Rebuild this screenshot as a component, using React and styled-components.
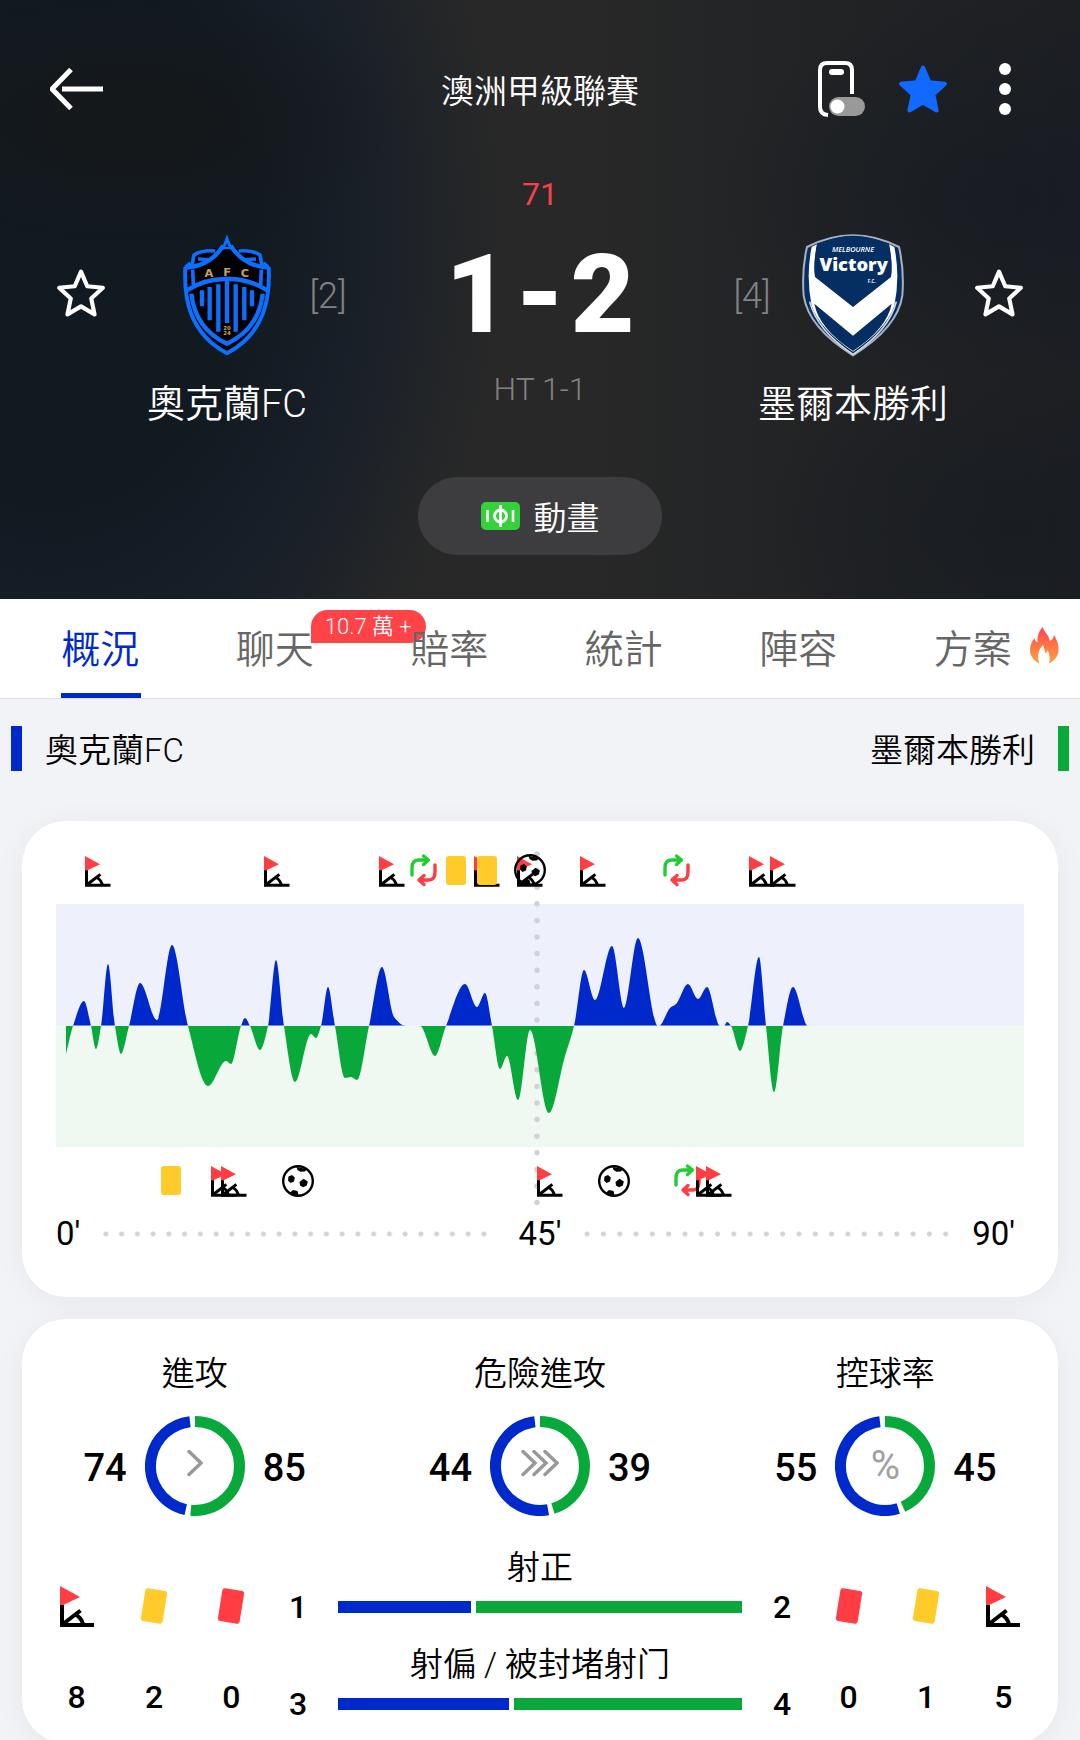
import React from "react";
import styled, { createGlobalStyle } from "styled-components";

const BLUE = "#0029cc";
const GREEN = "#08a83a";
const RED = "#ff3d42";
const YELLOW = "#ffcb2b";

const GlobalStyle = createGlobalStyle`
  *, *::before, *::after { box-sizing: border-box; }
  body {
    margin: 0;
    font-family: Roboto, "Noto Sans CJK TC", sans-serif;
    color: #000;
    background: #f2f3f7;
  }
  button { border: 0; padding: 0; background: none; font: inherit; color: inherit; cursor: pointer; }
  h1, h2, p { margin: 0; font-weight: 400; }
  svg { display: block; flex-shrink: 0; }
`;

/* ---------- shell ---------- */

const Screen = styled.div`
  height: 100vh;
  overflow-y: auto;
  scrollbar-width: none;
`;

const Header = styled.header`
  display: flex;
  flex-direction: column;
  align-items: center;
  padding-bottom: 44px;
  color: #fff;
  background:
    radial-gradient(ellipse 280px 130px at 12% 20%, rgba(22, 24, 25, 0.9), transparent),
    radial-gradient(ellipse 300px 200px at 94% 33%, rgba(20, 25, 34, 0.6), transparent),
    radial-gradient(ellipse 260px 160px at 94% 88%, rgba(22, 26, 32, 0.6), transparent),
    radial-gradient(ellipse 460px 640px at 5% 38%, #111921 42%, rgba(22, 30, 40, 0.8) 68%, transparent 98%),
    linear-gradient(90deg, #1b1f26 0%, #282828 36%, #282828 54%, #212325 76%, #1d1f23 100%);
`;

const TopBar = styled.div`
  display: grid;
  grid-template-columns: 1fr auto 1fr;
  align-items: center;
  width: 100%;
  padding: 56px 50px 0;
`;

const League = styled.h1`
  padding-top: 5px;
  font-size: 33px;
  line-height: 61px;
  font-weight: 350;
`;

const Actions = styled.div`
  display: flex;
  justify-content: flex-end;
  gap: 32px;
`;

const IconButton = styled.button`
  display: flex;
  align-items: center;
  justify-content: ${(p) => (p.$start ? "flex-start" : "center")};
  width: 50px;
  height: 66px;
`;

const Minute = styled.p`
  margin: 56px 0 23px;
  font-size: 32px;
  line-height: 32px;
  color: #f5414b;
`;

const Match = styled.div`
  display: grid;
  grid-template-columns: 50px 40px 162px 40px 1fr 40px 162px 40px 50px;
  grid-template-rows: 124px 53px;
  row-gap: 16px;
  align-items: center;
  justify-items: center;
  width: 100%;
  padding: 0 56px;
`;

const Cell = styled.div`
  grid-column: ${(p) => p.$col};
  grid-row: 1;
`;

const FavouriteCell = styled(Cell)`
  padding-bottom: 4px;
`;

const Rank = styled(Cell)`
  padding-top: 2px;
  font-size: 36px;
  line-height: 36px;
  font-weight: 300;
  color: #808285;
`;

const Score = styled(Cell)`
  display: flex;
  gap: 6px;
  font-size: 110px;
  line-height: 124px;
  font-weight: 900;
`;

const TeamName = styled.h2`
  grid-column: ${(p) => p.$col};
  grid-row: 2;
  align-self: end;
  font-size: 38px;
  line-height: 44px;
  font-weight: 350;
  white-space: nowrap;
`;

const HalfTime = styled.p`
  grid-column: 5;
  grid-row: 2;
  align-self: start;
  font-size: 32px;
  line-height: 32px;
  font-weight: 300;
  color: #808184;
`;

const AnimationButton = styled.button`
  display: flex;
  align-items: center;
  justify-content: center;
  gap: 14px;
  width: 244px;
  height: 78px;
  margin-top: 51px;
  border-radius: 39px;
  background: #3d3d3f;
  font-size: 33px;
  font-weight: 350;
`;

/* ---------- tabs ---------- */

const Tabs = styled.nav`
  position: relative;
  z-index: 0;
  display: grid;
  grid-template-columns: repeat(6, 1fr);
  padding: 0 19px 0 14px;
  background: #fff;
  border-bottom: 1px solid #dfe1e6;
`;

const Tab = styled.button`
  position: relative;
  justify-self: center;
  width: 80px;
  border-bottom: 5px solid ${(p) => (p.$active ? BLUE : "transparent")};
  padding-top: 9px;
  font-size: 39px;
  line-height: 85px;
  font-weight: 350;
  text-align: left;
  white-space: nowrap;
  color: ${(p) => (p.$active ? BLUE : "#666")};
`;

const Badge = styled.span`
  position: absolute;
  z-index: -1;
  left: 75px;
  top: 11px;
  padding: 1px 14px 0;
  border-radius: 20px 20px 20px 0;
  background: #ff4347;
  color: #fff;
  font-size: 22px;
  line-height: 32px;
`;

const TabLabel = styled.span`
  position: relative;
`;

const FlameSpot = styled.span`
  position: absolute;
  left: 96px;
  top: 28px;
`;

/* ---------- overview ---------- */

const Legend = styled.div`
  display: flex;
  justify-content: space-between;
  padding: 27px 11px 50px;
`;

const LegendTeam = styled.div`
  display: flex;
  flex-direction: ${(p) => (p.$away ? "row-reverse" : "row")};
  align-items: center;
  gap: 23px;
  font-size: 33px;
  font-weight: 350;
  line-height: 45px;

  &::before {
    content: "";
    width: 11px;
    height: 45px;
    background: ${(p) => (p.$away ? GREEN : BLUE)};
  }
`;

const LegendName = styled.span`
  padding-top: 4px;
  line-height: 41px;
`;

const Cards = styled.main`
  display: flex;
  flex-direction: column;
  gap: 22px;
  padding: 0 22px;
`;

const Card = styled.section`
  border-radius: 44px;
  background: #fff;
  box-shadow: 0 4px 30px rgba(20, 24, 40, 0.05);
`;

const TimelineCard = styled(Card)`
  padding: 29px 34px 46px;

  > svg { width: 100%; height: auto; }
`;

const Axis = styled.div`
  display: grid;
  grid-template-columns: 1fr auto 1fr;
  align-items: center;
  margin-top: 11px;
  font-size: 33px;
  line-height: 34px;
`;

const AxisHalf = styled.div`
  display: flex;
  align-items: center;
  padding-right: 9px;
`;

const Dots = styled.div`
  flex: 1;
  height: 6px;
  margin: 0 18px;
  background: radial-gradient(circle at center, #d2d4d5 2px, transparent 3px) 0 0 / 16px 6px round;
`;

const StatsCard = styled(Card)`
  padding: 38px 16px 22px;
`;

const Rings = styled.div`
  display: grid;
  grid-template-columns: repeat(3, 1fr);
  margin: 0 -16px;
`;

const RingBlock = styled.div`
  display: flex;
  flex-direction: column;
  align-items: center;
  gap: 25px;
`;

const StatTitle = styled.h2`
  font-size: 33px;
  line-height: 34px;
  font-weight: 350;
  text-align: center;
`;

const RingRow = styled.div`
  display: grid;
  grid-template-columns: 1fr 100px 1fr;
  align-items: center;
  gap: 18px;
  width: 100%;
`;

const RingValue = styled.span`
  padding-top: 4px;
  font-size: 38px;
  line-height: 40px;
  font-weight: 500;
  text-align: ${(p) => (p.$left ? "right" : "left")};
`;

const RingFrame = styled.div`
  display: grid;
  place-items: center;

  > * { grid-area: 1 / 1; }
`;

const Percent = styled.span`
  font-size: 40px;
  line-height: 40px;
  color: #a0a0a0;
`;

const StatsGrid = styled.div`
  display: grid;
  grid-template-columns: 232px 1fr 232px;
  margin-top: 35px;
`;

const Discipline = styled.div`
  display: grid;
  grid-template-columns: repeat(3, 1fr);
  padding-top: 34px;
`;

const DisciplineItem = styled.div`
  display: flex;
  flex-direction: column;
  align-items: center;
  gap: 53px;
`;

const IconBox = styled.div`
  display: flex;
  align-items: center;
  height: 42px;
`;

const Count = styled.span`
  width: ${(p) => (p.$fixed ? "56px" : "auto")};
  font-size: 32px;
  line-height: 34px;
  font-weight: 500;
  text-align: center;
`;

const Shots = styled.div`
  display: flex;
  flex-direction: column;
  gap: 24px;
`;

const ShotStat = styled.div`
  display: flex;
  flex-direction: column;
  gap: 5px;
`;

const ShotRow = styled.div`
  display: flex;
  align-items: center;
  gap: 12px;
`;

const Bar = styled.div`
  display: grid;
  grid-template-columns: ${(p) => `${p.$home}fr ${p.$away}fr`};
  gap: 5px;
  flex: 1;
  height: 12px;

  &::before { content: ""; background: ${BLUE}; }
  &::after { content: ""; background: ${GREEN}; }
`;

/* ---------- icons ---------- */

const STAR = "M24 3.5 L30 17.5 L45 19 L33.8 29.2 L37 44.5 L24 36.8 L11 44.5 L14.2 29.2 L3 19 L18 17.5 Z";

const Star = ({ filled }) => (
  <svg width="50" height="50" viewBox="0 0 48 48" aria-hidden="true">
    <path
      d={STAR}
      fill={filled ? "#1169ff" : "none"}
      stroke={filled ? "#1169ff" : "#fff"}
      strokeWidth="4"
      strokeLinejoin="round"
    />
  </svg>
);

const BackArrow = () => (
  <svg width="54" height="42" viewBox="0 0 54 42" fill="none" stroke="#fff" aria-hidden="true">
    <path d="M21 1.5 L2 21 L21 40.500" strokeWidth="5" />
    <path d="M12 21 H53" strokeWidth="5" />
  </svg>
);

const PhoneToggle = () => (
  <svg width="47" height="56" viewBox="0 0 47 56" fill="none" aria-hidden="true">
    <path d="M34 33 V9 Q34 2 27 2 H9 Q2 2 2 9 V46 Q2 53.5 10 54" stroke="#fff" strokeWidth="4" />
    <rect x="11" y="8" width="15" height="6" rx="3" fill="#fff" />
    <rect x="11" y="36" width="36" height="19" rx="9.5" fill="#999" />
    <circle cx="19.5" cy="45.500" r="7" fill="#fff" />
  </svg>
);

const MoreDots = () => (
  <svg width="12" height="52" viewBox="0 0 12 52" fill="#fff" aria-hidden="true">
    <circle cx="6" cy="6" r="6" />
    <circle cx="6" cy="26" r="6" />
    <circle cx="6" cy="46" r="6" />
  </svg>
);

const PitchIcon = () => (
  <svg width="39" height="28" viewBox="0 0 39 28" fill="none" stroke="#fff" aria-hidden="true">
    <rect width="39" height="28" rx="5" fill="#34d13d" stroke="none" />
    <path d="M6.500 8 V20 M32 8 V20" strokeWidth="2.6" />
    <circle cx="19.500" cy="14" r="6" strokeWidth="2.8" />
    <path d="M19.500 3 V25" strokeWidth="2.8" />
  </svg>
);

const Flame = () => (
  <svg width="29" height="37" viewBox="0 0 29 37" aria-hidden="true">
    <defs>
      <linearGradient id="flame" x1="0" y1="0" x2="0" y2="1">
        <stop offset="0.1" stopColor="#ff4d55" />
        <stop offset="0.5" stopColor="#ff7442" />
        <stop offset="1" stopColor="#ffa247" />
      </linearGradient>
    </defs>
    <path
      fill="url(#flame)"
      d="M12.700 0 C14 5 19 8 20 14 C22 13 23.500 11 24 8 C27 13 29 18 28.500 24 C28 30 24 34 19 36.500 C20.500 31 19.500 27 17.500 23 C17 25 16.500 26 15.200 26 C14.500 22 14 20 13 18 C8 23 7 30 9.500 36.500 C4 34 0 29 0 23 C0 18 2 14 4.500 11 C5 13.500 6 15 7.500 15 C7 9 9 4 12.700 0 Z"
    />
  </svg>
);

const AucklandCrest = () => (
  <svg width="90" height="124" viewBox="36 24 270 372" role="img" aria-label="奧克蘭FC">
    <path
      d="M171 30 L188 68 L240 72 L272 90 L280 112 L300 124 Q304 210 284 270 Q255 340 171 392 Q87 340 58 270 Q38 210 42 124 L62 112 L70 90 L102 72 L154 68 Z"
      fill="#000"
    />
    <g fill="none" stroke="#0b70ff" strokeWidth="11">
      <path d="M46 126 Q42 210 64 268 Q94 344 171 385 Q248 344 278 268 Q300 210 296 126" strokeWidth="12" />
      <path d="M46 128 Q120 124 160 62 M296 128 Q222 124 182 62" strokeWidth="13" />
      <path d="M66 122 L72 90 Q96 74 136 78 M276 122 L270 90 Q246 74 206 78" />
      <path d="M84 102 L118 104 M258 102 L224 104" strokeWidth="10" />
      <path d="M46 128 L62 114 M296 128 L280 114" />
      <path d="M68 134 L70 180 M274 134 L272 180" />
      <path d="M50 196 Q108 160 171 162 Q234 160 292 196" strokeWidth="13" />
      <path d="M64 206 Q76 312 171 356 Q266 312 278 206" strokeWidth="13" />
      <path d="M96 196 V244 M119 186 V286 M145 178 V320 M171 164 V294 M197 178 V320 M223 186 V286 M246 196 V244" strokeWidth="13" />
    </g>
    <path d="M171 28 L190 78 Q171 66 152 78 Z" fill="#0b70ff" />
    <path d="M171 55 L176 66 H166 Z" fill="#000" />
    <g fill="#c9a063" fontFamily="DejaVu Sans, sans-serif" fontWeight="700" fontSize="34" textAnchor="middle">
      <text x="117" y="157">A</text>
      <text x="171" y="153">F</text>
      <text x="225" y="157">C</text>
      <text x="171" y="314" fontSize="16">20</text>
      <text x="171" y="329" fontSize="16">24</text>
    </g>
  </svg>
);

const VictoryCrest = () => (
  <svg width="104" height="124" viewBox="32 20 312 372" role="img" aria-label="墨爾本勝利">
    <path
      d="M50 62 Q188 -8 326 62 Q342 130 336 208 Q322 304 188 387 Q54 304 40 208 Q34 130 50 62 Z"
      fill="#052f63"
      stroke="#a9b2bf"
      strokeWidth="6"
    />
    <path
      d="M64 62 L80 54 Q70 110 74 152 L188 242 L302 152 Q306 110 296 54 L312 62 Q330 150 312 238 Q288 308 188 376 Q88 308 64 238 Q46 150 64 62 Z"
      fill="#fff"
    />
    <path d="M80 54 Q188 2 296 54 Q308 110 302 150 L188 240 L74 150 Q68 110 80 54 Z" fill="#052f63" />
    <path d="M72 232 L188 328 L304 232 Q290 306 188 374 Q86 306 72 232 Z" fill="#052f63" />
    <path d="M58 226 Q80 312 188 384 Q296 312 318 226" fill="none" stroke="#d5dbe4" strokeWidth="5" />
    <g fill="#fff" fontFamily="Open Sans, sans-serif" textAnchor="middle">
      <text x="188" y="76" fontSize="22" fontWeight="600" fontStyle="italic">MELBOURNE</text>
      <text x="190" y="134" fontSize="55" fontWeight="800">Victory</text>
      <text x="244" y="170" fontSize="13" fontWeight="700">F.C.</text>
    </g>
  </svg>
);

const CornerShape = () => (
  <>
    <path d="M0 0 L20 11 L0 20.500 Z" fill={RED} />
    <path d="M2 19 V39 H34" fill="none" stroke="#000" strokeWidth="4" />
    <path d="M3 38 L20.500 24.500 M14.500 28 Q21 31 23 38" fill="none" stroke="#000" strokeWidth="4" />
  </>
);

const CornerIcon = () => (
  <svg width="34" height="41" viewBox="0 0 34 41" role="img" aria-label="角球">
    <CornerShape />
  </svg>
);

const CardIcon = ({ color, label }) => (
  <svg width="28" height="38" viewBox="0 0 28 38" role="img" aria-label={label}>
    <rect x="3" y="2.500" width="22" height="33" rx="2.500" fill={color} transform="rotate(9 14 19)" />
  </svg>
);

/* ---------- match timeline ---------- */

const EVENTS = [
  ["corner", 29, 6], ["corner", 208, 6], ["corner", 323, 6], ["sub", 354, 4],
  ["yellow", 390, 6], ["corner", 418, 6], ["yellow", 421, 6], ["corner", 461, 6],
  ["goal", 474, 20], ["corner", 524, 6], ["sub", 607, 4], ["corner", 693, 6], ["corner", 714, 6],
  ["yellow", 105, 316], ["corner", 155, 316], ["corner", 165, 316], ["goal", 242, 331],
  ["corner", 481, 316], ["goal", 558, 331], ["sub", 618, 314], ["corner", 640, 316], ["corner", 650, 316],
];

// [position, pressure]: above zero is the home side, below zero the away side
const PRESSURE = [
  [10, -28], [17, 0], [28, 25], [35, 0], [40, -23], [45, 0], [52, 62], [59, 0], [65, -28], [73, 0],
  [84, 43], [101, 6], [116, 81], [132, 0], [152, -60], [170, -35], [175, -38], [185, 0], [189, 8],
  [194, 0], [204, -24], [212, 0], [220, 66], [228, 0], [239, -56], [255, -8], [260, -12], [265, 0],
  [272, 39], [279, 0], [289, -52], [295, -51], [301, -54], [313, 0], [326, 59], [338, 9], [350, 0],
  [364, 0], [379, -30], [390, 0], [409, 42], [421, 19], [429, 33], [436, 0], [444, -43], [451, -30],
  [462, -74], [474, -4], [493, -87], [509, -30], [518, 0], [528, 56], [539, 26], [556, 80], [568, 18],
  [582, 88], [602, 0], [603, 0], [614, 18], [620, 22], [632, 42], [642, 27], [651, 39], [664, 0], [668, 0],
  [671, 4], [675, 0], [684, -25], [692, 0], [703, 69], [710, 0], [718, -66], [727, 0], [737, 39], [752, 0],
];

const MID = 176;

// Monotone cubic curve, so that no peak overshoots its data point
function pressurePath(points) {
  const n = points.length;
  const slope = [];
  for (let i = 0; i < n - 1; i++) {
    slope.push((points[i + 1][1] - points[i][1]) / (points[i + 1][0] - points[i][0]));
  }
  const tangent = points.map((_, i) => {
    if (i === 0) return slope[0];
    if (i === n - 1) return 0;
    const a = slope[i - 1];
    const b = slope[i];
    if (a * b <= 0) return 0;
    return (2 * a * b) / (a + b);
  });
  let d = `M${points[0][0]} ${MID} V${MID - points[0][1]}`;
  for (let i = 0; i < n - 1; i++) {
    const [x0, v0] = points[i];
    const [x1, v1] = points[i + 1];
    const h = (x1 - x0) / 3;
    d += ` C${x0 + h} ${MID - v0 - tangent[i] * h} ${x1 - h} ${MID - v1 + tangent[i + 1] * h} ${x1} ${MID - v1}`;
  }
  return `${d} V${MID} Z`;
}

const EventMark = ({ type, x, y }) => {
  if (type === "corner") {
    return <g transform={`translate(${x} ${y}) scale(0.75)`}><CornerShape /></g>;
  }
  if (type === "yellow") {
    return <rect x={x} y={y} width="20" height="29" rx="3" fill={YELLOW} />;
  }
  if (type === "sub") {
    return (
      <g transform={`translate(${x} ${y})`} fill="none" strokeWidth="3.4" strokeLinecap="round" strokeLinejoin="round">
        <path d="M2 21 V14 Q2 6 9 6 H18 M13.500 2 L18.500 6 L13.500 10.500" stroke="#22cc33" />
        <path d="M25 11 V18 Q25 26 19 26 H10 M14 21.500 L9 26 L14 30.500" stroke={RED} />
      </g>
    );
  }
  return (
    <g transform={`translate(${x} ${y})`}>
      <circle r="14.800" fill="none" stroke="#000" strokeWidth="2.400" />
      <path d="M-9.500 -4.500 L-6 -6 L-3.200 -3.500 L-4 0.500 L-7.500 2 L-10 -0.500 Z" />
      <path d="M1.500 1 L5.500 -2.200 L9.800 0.500 L8.800 4.500 L5 6.200 L2 4.500 Z" />
      <path d="M-1.500 -14 L9 -12 L7 -9.500 L2.500 -9.200 L-0.500 -11 Z" />
      <path d="M-8.500 12 L-5 9 L-0.500 10 L0.500 14 L-4 14.500 Z" />
    </g>
  );
};

const Timeline = () => {
  const path = pressurePath(PRESSURE);
  return (
    <svg viewBox="0 0 968 356" role="img" aria-label="比賽走勢">
      <defs>
        <clipPath id="home"><rect x="0" y="0" width="968" height={MID - 0.500} /></clipPath>
        <clipPath id="away"><rect x="0" y={MID} width="968" height="180" /></clipPath>
      </defs>
      <rect x="0" y="54" width="968" height="122" fill="#eef1fc" />
      <rect x="0" y="176" width="968" height="121" fill="#eff9f2" />
      <path d="M481 4 V354" stroke="#d0d3d6" strokeWidth="5.500" strokeLinecap="round" strokeDasharray="0 16.600" />
      <path d={path} fill={BLUE} clipPath="url(#home)" />
      <path d={path} fill={GREEN} clipPath="url(#away)" />
      {EVENTS.map(([type, x, y]) => (
        <EventMark key={`${type}-${x}-${y}`} type={type} x={x} y={y} />
      ))}
    </svg>
  );
};

/* ---------- ring charts ---------- */

const GAP = 6.5;

const Ring = ({ home, away }) => {
  const span = 360 - GAP * 2;
  const awayArc = (span * away) / (home + away);
  const homeArc = span - awayArc;
  const ring = { cx: 50, cy: 50, r: 44.5, fill: "none", strokeWidth: 11, pathLength: 360 };
  return (
    <svg width="100" height="100" viewBox="0 0 100 100" aria-hidden="true">
      <circle {...ring} stroke={GREEN} strokeDasharray={`${awayArc} 360`} transform="rotate(-90 50 50)" />
      <circle
        {...ring}
        stroke={BLUE}
        strokeDasharray={`${homeArc} 360`}
        transform={`rotate(${awayArc + GAP - 90} 50 50)`}
      />
    </svg>
  );
};

const Chevrons = ({ count }) => {
  const width = 17 + (count - 1) * 11;
  return (
    <svg width={width} height="32" viewBox={`0 0 ${width} 32`} fill="none" aria-hidden="true">
      {Array.from({ length: count }, (_, i) => (
        <path
          key={i}
          d={`M${3 + i * 11} 1.5 L${15 + i * 11} 13 L${3 + i * 11} 24.5`}
          stroke="#999"
          strokeWidth="3.500"
          strokeLinecap="round"
        />
      ))}
    </svg>
  );
};

const RINGS = [
  { title: "進攻", home: 74, away: 85, mark: <Chevrons count={1} /> },
  { title: "危險進攻", home: 44, away: 39, mark: <Chevrons count={3} /> },
  { title: "控球率", home: 55, away: 45, mark: <Percent>%</Percent> },
];

const SHOTS = [
  { title: "射正", home: 1, away: 2 },
  { title: "射偏 / 被封堵射门", home: 3, away: 4 },
];

const HOME_COUNTS = [["corner", 8], ["yellow", 2], ["red", 0]];
const AWAY_COUNTS = [["red", 0], ["yellow", 1], ["corner", 5]];

const DisciplineGroup = ({ items }) => (
  <Discipline>
    {items.map(([kind, value]) => (
      <DisciplineItem key={kind}>
        <IconBox>
          {kind === "corner" && <CornerIcon />}
          {kind === "yellow" && <CardIcon color={YELLOW} label="黃牌" />}
          {kind === "red" && <CardIcon color={RED} label="紅牌" />}
        </IconBox>
        <Count>{value}</Count>
      </DisciplineItem>
    ))}
  </Discipline>
);

const TABS = ["概況", "聊天", "賠率", "統計", "陣容", "方案"];

export default function App() {
  return (
    <Screen>
      <GlobalStyle />
      <Header>
        <TopBar>
          <IconButton $start aria-label="返回"><BackArrow /></IconButton>
          <League>澳洲甲級聯賽</League>
          <Actions>
            <IconButton aria-label="懸浮窗"><PhoneToggle /></IconButton>
            <IconButton aria-label="已收藏"><Star filled /></IconButton>
            <IconButton aria-label="更多"><MoreDots /></IconButton>
          </Actions>
        </TopBar>
        <Minute>71</Minute>
        <Match>
          <FavouriteCell $col={1}><IconButton aria-label="收藏奧克蘭FC"><Star /></IconButton></FavouriteCell>
          <Cell $col={3}><AucklandCrest /></Cell>
          <Rank $col={4}>[2]</Rank>
          <Score $col={5}><span>1</span><span>-</span><span>2</span></Score>
          <Rank $col={6}>[4]</Rank>
          <Cell $col={7}><VictoryCrest /></Cell>
          <FavouriteCell $col={9}><IconButton aria-label="收藏墨爾本勝利"><Star /></IconButton></FavouriteCell>
          <TeamName $col={3}>奧克蘭FC</TeamName>
          <HalfTime>HT 1-1</HalfTime>
          <TeamName $col={7}>墨爾本勝利</TeamName>
        </Match>
        <AnimationButton><PitchIcon />動畫</AnimationButton>
      </Header>

      <Tabs>
        {TABS.map((name, i) => (
          <Tab key={name} $active={i === 0}>
            {i === 1 && <Badge>10.7 萬 +</Badge>}
            <TabLabel>{name}</TabLabel>
            {i === 5 && <FlameSpot><Flame /></FlameSpot>}
          </Tab>
        ))}
      </Tabs>

      <Legend>
        <LegendTeam><LegendName>奧克蘭FC</LegendName></LegendTeam>
        <LegendTeam $away><LegendName>墨爾本勝利</LegendName></LegendTeam>
      </Legend>

      <Cards>
        <TimelineCard>
          <Timeline />
          <Axis>
            <AxisHalf><span>0'</span><Dots /></AxisHalf>
            <span>45'</span>
            <AxisHalf><Dots /><span>90'</span></AxisHalf>
          </Axis>
        </TimelineCard>

        <StatsCard>
          <Rings>
            {RINGS.map(({ title, home, away, mark }) => (
              <RingBlock key={title}>
                <StatTitle>{title}</StatTitle>
                <RingRow>
                  <RingValue $left>{home}</RingValue>
                  <RingFrame><Ring home={home} away={away} />{mark}</RingFrame>
                  <RingValue>{away}</RingValue>
                </RingRow>
              </RingBlock>
            ))}
          </Rings>
          <StatsGrid>
            <DisciplineGroup items={HOME_COUNTS} />
            <Shots>
              {SHOTS.map(({ title, home, away }) => (
                <ShotStat key={title}>
                  <StatTitle>{title}</StatTitle>
                  <ShotRow>
                    <Count $fixed>{home}</Count>
                    <Bar $home={home} $away={away} />
                    <Count $fixed>{away}</Count>
                  </ShotRow>
                </ShotStat>
              ))}
            </Shots>
            <DisciplineGroup items={AWAY_COUNTS} />
          </StatsGrid>
        </StatsCard>
      </Cards>
    </Screen>
  );
}
